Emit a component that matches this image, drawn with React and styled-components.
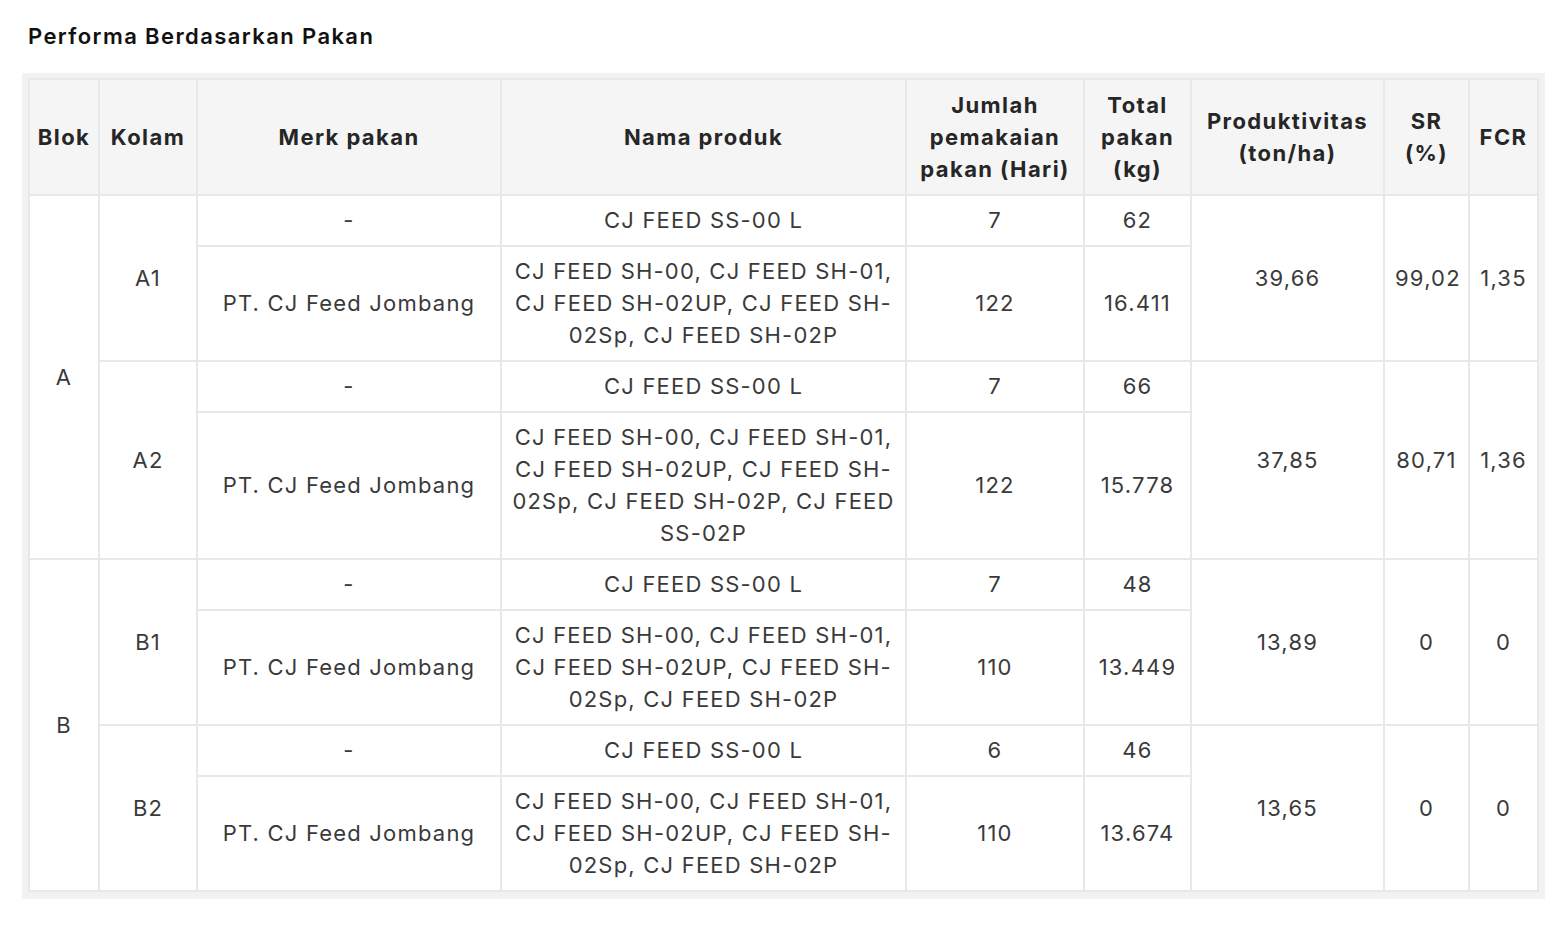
import React from "react";
import styled, { createGlobalStyle } from "styled-components";

const Global = createGlobalStyle`
  html, body { margin: 0; padding: 0; background: #ffffff; }
  body { font-family: Inter, "Noto Sans", sans-serif; color: #333; }
`;

const Page = styled.div`
  padding: 22px 22px 0 22px;
  width: 1568px;
  box-sizing: border-box;
`;

const Title = styled.h2`
  margin: 0 0 23px 6px;
  font-size: 22px;
  line-height: 28px;
  font-weight: 600;
  letter-spacing: 1.4px;
  color: #111;
`;

const Frame = styled.div`
  background: #f2f2f3;
  padding: 5px 6px 7px 6px;
  width: 1523px;
  box-sizing: border-box;
`;

const Table = styled.table`
  width: 100%;
  border-collapse: collapse;
  table-layout: fixed;
  background: #fff;
  border: 2px solid #e8e8ec;
`;

const Th = styled.th`
  background: #f5f5f6;
  border: 2px solid #e8e8ec;
  font-size: 22px;
  line-height: 32px;
  font-weight: 700;
  color: #262626;
  padding: 8px 4px;
  text-align: center;
  height: 116px;
  box-sizing: border-box;
  letter-spacing: 1.4px;
`;

const Td = styled.td`
  border: 2px solid #e8e8ec;
  font-size: 22px;
  line-height: 32px;
  font-weight: 400;
  color: #3a3a3a;
  padding: 8px 10px 9px 10px;
  text-align: center;
  vertical-align: middle;
  letter-spacing: 1.2px;
  box-sizing: border-box;
`;

const widths = [70, 98, 304, 405, 178, 107, 193, 85, 69];

const headers = [
  "Blok",
  "Kolam",
  "Merk pakan",
  "Nama produk",
  "Jumlah pemakaian pakan (Hari)",
  "Total pakan (kg)",
  "Produktivitas (ton/ha)",
  "SR (%)",
  "FCR",
];

const data = [
  {
    blok: "A",
    kolam: [
      {
        name: "A1",
        rows: [
          ["-", "CJ FEED SS-00 L", "7", "62"],
          ["PT. CJ Feed Jombang", "CJ FEED SH-00, CJ FEED SH-01, CJ FEED SH-02UP, CJ FEED SH-02Sp, CJ FEED SH-02P", "122", "16.411"],
        ],
        prod: "39,66",
        sr: "99,02",
        fcr: "1,35",
      },
      {
        name: "A2",
        rows: [
          ["-", "CJ FEED SS-00 L", "7", "66"],
          ["PT. CJ Feed Jombang", "CJ FEED SH-00, CJ FEED SH-01, CJ FEED SH-02UP, CJ FEED SH-02Sp, CJ FEED SH-02P, CJ FEED SS-02P", "122", "15.778"],
        ],
        prod: "37,85",
        sr: "80,71",
        fcr: "1,36",
      },
    ],
  },
  {
    blok: "B",
    kolam: [
      {
        name: "B1",
        rows: [
          ["-", "CJ FEED SS-00 L", "7", "48"],
          ["PT. CJ Feed Jombang", "CJ FEED SH-00, CJ FEED SH-01, CJ FEED SH-02UP, CJ FEED SH-02Sp, CJ FEED SH-02P", "110", "13.449"],
        ],
        prod: "13,89",
        sr: "0",
        fcr: "0",
      },
      {
        name: "B2",
        rows: [
          ["-", "CJ FEED SS-00 L", "6", "46"],
          ["PT. CJ Feed Jombang", "CJ FEED SH-00, CJ FEED SH-01, CJ FEED SH-02UP, CJ FEED SH-02Sp, CJ FEED SH-02P", "110", "13.674"],
        ],
        prod: "13,65",
        sr: "0",
        fcr: "0",
      },
    ],
  },
];

export default function App() {
  const body = [];
  data.forEach((b) => {
    const blokSpan = b.kolam.reduce((s, k) => s + k.rows.length, 0);
    b.kolam.forEach((k, ki) => {
      k.rows.forEach((r, ri) => {
        body.push(
          <tr key={`${k.name}-${ri}`}>
            {ki === 0 && ri === 0 && <Td rowSpan={blokSpan}>{b.blok}</Td>}
            {ri === 0 && <Td rowSpan={k.rows.length}>{k.name}</Td>}
            <Td>{r[0]}</Td>
            <Td>{r[1]}</Td>
            <Td>{r[2]}</Td>
            <Td>{r[3]}</Td>
            {ri === 0 && <Td rowSpan={k.rows.length}>{k.prod}</Td>}
            {ri === 0 && <Td rowSpan={k.rows.length}>{k.sr}</Td>}
            {ri === 0 && <Td rowSpan={k.rows.length}>{k.fcr}</Td>}
          </tr>
        );
      });
    });
  });

  return (
    <>
      <Global />
      <Page>
        <Title>Performa Berdasarkan Pakan</Title>
        <Frame>
          <Table>
            <colgroup>
              {widths.map((w, i) => (
                <col key={i} style={{ width: `${w}px` }} />
              ))}
            </colgroup>
            <thead>
              <tr>
                {headers.map((h) => (
                  <Th key={h}>{h}</Th>
                ))}
              </tr>
            </thead>
            <tbody>{body}</tbody>
          </Table>
        </Frame>
      </Page>
    </>
  );
}
